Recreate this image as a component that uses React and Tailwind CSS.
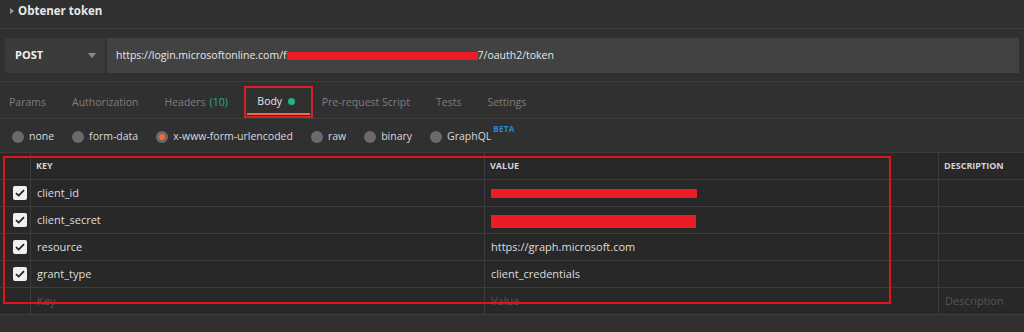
import { useState } from "react";

const tabs = [
  { label: "Params" },
  { label: "Authorization" },
  { label: "Headers", count: "(10)" },
  { label: "Body", active: true },
  { label: "Pre-request Script" },
  { label: "Tests" },
  { label: "Settings" },
];

const bodyTypes = ["none", "form-data", "x-www-form-urlencoded", "raw", "binary", "GraphQL"];

const rows = [
  { key: "client_id", value: null, redact: "w-[206px] h-[9px] mt-[1px]" },
  { key: "client_secret", value: null, redact: "w-[205px] h-[13px] mt-[2px]" },
  { key: "resource", value: "https://graph.microsoft.com" },
  { key: "grant_type", value: "client_credentials" },
];

const Check = () => (
  <div className="w-[14px] h-[14px] rounded-[2px] bg-[#f0f0f0] flex items-center justify-center">
    <svg width="10" height="8" viewBox="0 0 10 8">
      <path d="M1 4.2 L3.7 6.6 L9 1.2" fill="none" stroke="#222" strokeWidth="1.8" />
    </svg>
  </div>
);

const App = () => {
  const [mode, setMode] = useState("x-www-form-urlencoded");

  return (
    <div className="relative w-[1024px] h-[332px] overflow-hidden bg-[#303030] text-[10.5px] font-['Open_Sans',sans-serif]">
      {/* request name */}
      <div className="h-[29px] flex items-start pt-[2px] pl-[9px] border-b border-[#404040]">
        <div className="flex items-center h-[18px]">
          <svg width="6" height="8" viewBox="0 0 6 8" className="mr-[3px]">
            <path d="M1 1 L5 4 L1 7 Z" fill="#9a9a9a" />
          </svg>
          <span className="text-[11.5px] font-bold text-[#e8e8e8]">Obtener token</span>
        </div>
      </div>

      {/* url bar */}
      <div className="h-[53px] pt-[9px] px-[5px] border-b border-[#3c3c3c]">
        <div className="flex h-[35px]">
          <div className="w-[100px] bg-[#3b3b3b] rounded-l-[3px] flex items-center pl-[10px] pr-[9px] justify-between">
            <span className="text-[11px] font-bold text-[#f2f2f2]">POST</span>
            <svg width="8" height="5" viewBox="0 0 8 5">
              <path d="M0 0 L8 0 L4 5 Z" fill="#8a8a8a" />
            </svg>
          </div>
          <div className="flex-1 ml-[2px] bg-[#424242] flex items-center pl-[9px] text-[#e6e6e6]">
            <span>https://login.microsoftonline.com/f</span>
            <span className="inline-block w-[191px] h-[8px] bg-[#ed1c24]" />
            <span>7/oauth2/token</span>
          </div>
        </div>
      </div>

      {/* tabs */}
      <div className="h-[37px] flex items-center gap-[26px] pl-[9px] pt-[5px] border-b border-[#3c3c3c] text-[#7e7e7e]">
        {tabs.map((t) =>
          t.active ? (
            <div
              key={t.label}
              className="h-[32px] mt-[-1px] w-[69px] -ml-[10px] -mr-[17px] border-2 border-[#d62027] flex flex-col items-center"
            >
              <div className="flex-1 flex items-center text-[#e6e6e6] pt-[2px] -ml-[4px]">
                {t.label}
                <span className="ml-[6px] w-[7px] h-[7px] rounded-full bg-[#26b47f]" />
              </div>
              <div className="w-[63px] h-[2px] bg-[#f26b3a] mb-[1px]" />
            </div>
          ) : (
            <span key={t.label} className="whitespace-nowrap">
              {t.label}
              {t.count && <span className="ml-[4px] text-[#26b47f]">{t.count}</span>}
            </span>
          )
        )}
      </div>

      {/* body type radios */}
      <div className="h-[33px] flex items-center gap-[18px] pl-[12px] pt-[2px] text-[#dadada]">
        {bodyTypes.map((b) => (
          <label key={b} className="flex items-center cursor-pointer" onClick={() => setMode(b)}>
            <span className="w-[12px] h-[12px] rounded-full bg-[#6a6a6a] flex items-center justify-center mr-[5px]">
              {mode === b && <span className="w-[6px] h-[6px] rounded-full bg-[#f26b3a]" />}
            </span>
            {b}
            {b === "GraphQL" && (
              <sup className="ml-[2px] -mt-[8px] text-[8px] font-bold text-[#2f8ad6] tracking-[0.3px]">BETA</sup>
            )}
          </label>
        ))}
      </div>

      {/* params table */}
      <div className="bg-[#282828] border-t border-[#3c3c3c] text-[#dedede] text-[11px]">
        <div className="grid grid-cols-[31px_454px_454px_1fr] h-[27px] border-b border-[#3c3c3c] text-[9px] font-bold text-[#d4d4d4]">
          <div className="border-r border-[#3c3c3c]" />
          <div className="border-r border-[#3c3c3c] flex items-center pl-[5px]">KEY</div>
          <div className="border-r border-[#3c3c3c] flex items-center pl-[5px]">VALUE</div>
          <div className="flex items-center pl-[5px]">DESCRIPTION</div>
        </div>
        {rows.map((r) => (
          <div key={r.key} className="grid grid-cols-[31px_454px_454px_1fr] h-[27px] border-b border-[#3c3c3c]">
            <div className="border-r border-[#3c3c3c] flex items-center pl-[13px]">
              <Check />
            </div>
            <div className="border-r border-[#3c3c3c] flex items-center pl-[6px]">{r.key}</div>
            <div className="border-r border-[#3c3c3c] flex items-center pl-[6px]">
              {r.value ?? <span className={`inline-block bg-[#ed1c24] ${r.redact}`} />}
            </div>
            <div />
          </div>
        ))}
        <div className="grid grid-cols-[31px_454px_454px_1fr] h-[27px] border-b border-[#3c3c3c] text-[#565656]">
          <div className="border-r border-[#3c3c3c]" />
          <div className="border-r border-[#3c3c3c] flex items-center pl-[6px]">Key</div>
          <div className="border-r border-[#3c3c3c] flex items-center pl-[6px]">Value</div>
          <div className="flex items-center pl-[6px]">Description</div>
        </div>
      </div>

      {/* annotation box */}
      <div className="absolute left-[3px] top-[156px] w-[888px] h-[148px] border-2 border-[#e0141c] pointer-events-none" />
    </div>
  );
};

export default App;
